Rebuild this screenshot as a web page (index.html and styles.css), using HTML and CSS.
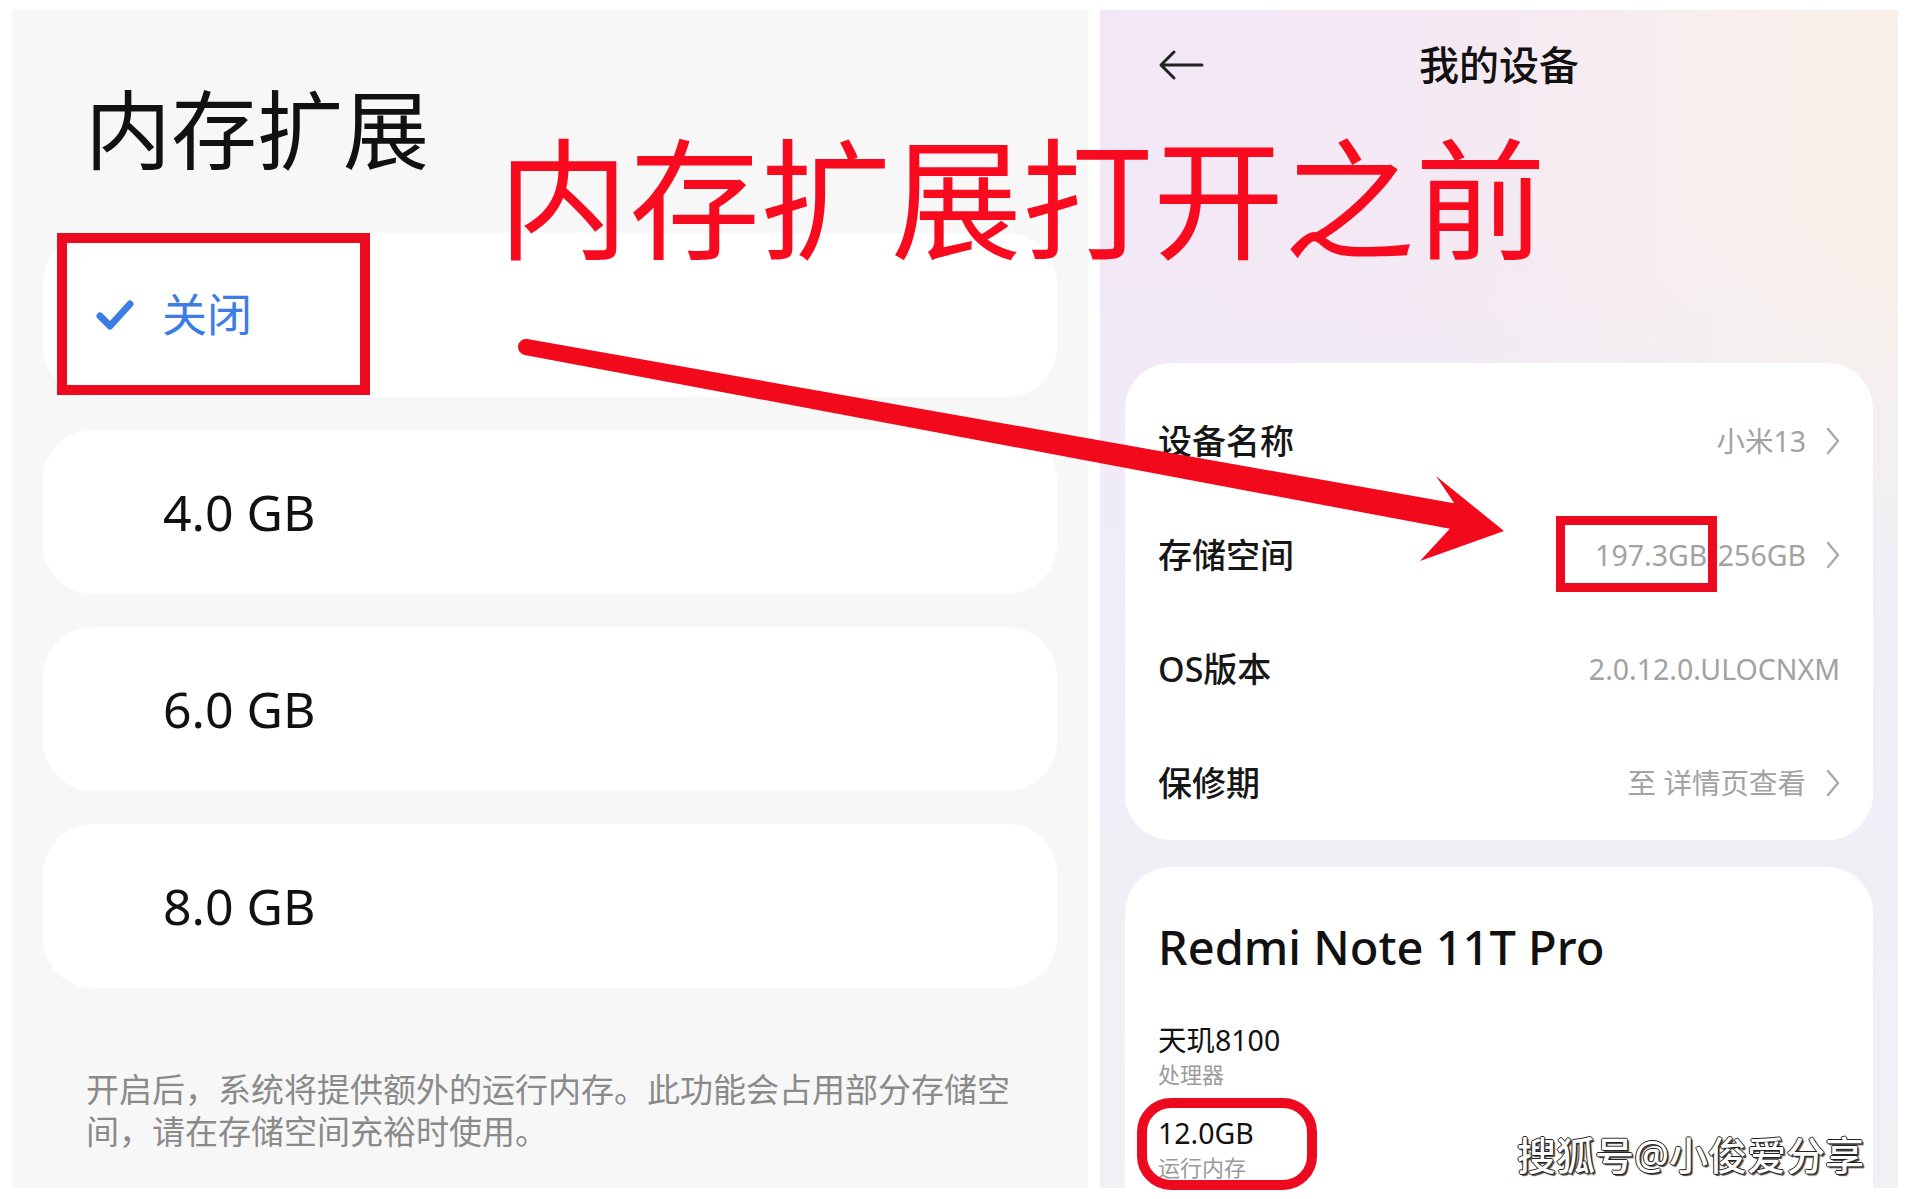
FILE: index.html
```html
<!DOCTYPE html>
<html lang="zh-CN">
<head>
  <meta charset="UTF-8">
  <meta name="viewport" content="width=device-width, initial-scale=1.0">
  <title>内存扩展 / 我的设备</title>
  <link rel="stylesheet" href="styles.css">
</head>
<body>
  <div class="page">

    <!-- Memory extension settings -->
    <section class="panel memory">
      <h1 class="memory-title">内存扩展</h1>
      <ul class="options">
        <li class="option selected">
          <svg class="check" width="40" height="34" viewBox="0 0 40 34">
            <polyline points="5,18 15,28 35,6" fill="none" stroke="#3b7de3" stroke-width="7" stroke-linecap="round" stroke-linejoin="round"/>
          </svg>
          <span>关闭</span>
        </li>
        <li class="option"><span>4.0 GB</span></li>
        <li class="option"><span>6.0 GB</span></li>
        <li class="option"><span>8.0 GB</span></li>
      </ul>
      <p class="memory-note">开启后，系统将提供额外的运行内存。此功能会占用部分存储空间，请在存储空间充裕时使用。</p>
    </section>

    <!-- My device -->
    <section class="panel device">
      <header class="device-head">
        <svg class="back" width="46" height="32" viewBox="0 0 46 32">
          <path d="M44 16H3M16 3L3 16l13 13" fill="none" stroke="#222" stroke-width="3" stroke-linecap="round" stroke-linejoin="round"/>
        </svg>
        <h2>我的设备</h2>
        <span></span>
      </header>

      <div class="card info-list">
        <div class="info-row">
          <span class="info-label">设备名称</span>
          <span class="info-value">小米13
            <svg class="chevron" width="14" height="28" viewBox="0 0 14 28"><polyline points="2,2 12,14 2,26" fill="none" stroke="#ababab" stroke-width="2.5" stroke-linecap="round" stroke-linejoin="round"/></svg>
          </span>
        </div>
        <div class="info-row">
          <span class="info-label">存储空间</span>
          <span class="info-value">197.3GB/256GB
            <svg class="chevron" width="14" height="28" viewBox="0 0 14 28"><polyline points="2,2 12,14 2,26" fill="none" stroke="#ababab" stroke-width="2.5" stroke-linecap="round" stroke-linejoin="round"/></svg>
          </span>
        </div>
        <div class="info-row">
          <span class="info-label">OS版本</span>
          <span class="info-value">2.0.12.0.ULOCNXM</span>
        </div>
        <div class="info-row">
          <span class="info-label">保修期</span>
          <span class="info-value">至 详情页查看
            <svg class="chevron" width="14" height="28" viewBox="0 0 14 28"><polyline points="2,2 12,14 2,26" fill="none" stroke="#ababab" stroke-width="2.5" stroke-linecap="round" stroke-linejoin="round"/></svg>
          </span>
        </div>
      </div>

      <div class="card spec-card">
        <h3 class="model">Redmi Note 11T Pro</h3>
        <div class="spec">
          <div class="spec-value">天玑8100</div>
          <div class="spec-name">处理器</div>
        </div>
        <div class="spec">
          <div class="spec-value">12.0GB</div>
          <div class="spec-name">运行内存</div>
        </div>
      </div>
    </section>

    <!-- Red annotations drawn over both screens -->
    <div class="marks">
      <div class="headline">内存扩展打开之前</div>
      <div class="ring ring-off"></div>
      <div class="ring ring-storage"></div>
      <div class="ring ring-ram"></div>
      <svg class="pointer" width="1909" height="1199" viewBox="0 0 1909 1199">
        <path d="M527.4,339.1 L1454.2,503.2 L1436,476 L1504,531 L1420,561 L1449.8,528.8 L524.6,354.9 A8,8 0 0 1 527.4,339.1 Z" fill="#f20a1c"/>
      </svg>
      <div class="watermark">搜狐号@小俊爱分享</div>
    </div>

  </div>
</body>
</html>
```

FILE: styles.css
```css
* {
  box-sizing: border-box;
}

body {
  margin: 0;
  background: #fff;
  font-family: "Noto Sans", "Noto Sans CJK SC", sans-serif;
  color: #111;
}

.page {
  position: relative;
  display: flex;
  gap: 12px;
  width: 1909px;
  height: 1199px;
  padding: 10px 11px 11px 12px;
  overflow: hidden;
}

.panel {
  height: 1178px;
  flex-shrink: 0;
}

/* ---------- memory extension ---------- */

.memory {
  width: 1076px;
  background: #f7f7f7;
  padding: 78px 31px 0;
}

.memory-title {
  margin: 0 0 61px 42px;
  font-size: 86px;
  line-height: 84px;
  font-weight: 400;
  color: #111;
}

.options {
  list-style: none;
  margin: 0;
  padding: 0;
  display: flex;
  flex-direction: column;
  gap: 33px;
}

.option {
  height: 164px;
  background: #fff;
  border-radius: 50px;
  display: flex;
  align-items: center;
  padding-left: 120px;
  font-size: 50px;
  line-height: 60px;
  color: #111;
}

.option.selected {
  padding-left: 52px;
  gap: 27px;
  font-size: 45px;
  color: #3b7de3;
}

.memory-note {
  margin: 81px 0 0 43px;
  width: 940px;
  font-size: 33px;
  line-height: 42px;
  color: #8a8a8a;
}

/* ---------- my device ---------- */

.device {
  width: 798px;
  overflow: hidden;
  padding: 0 25px;
  background:
    linear-gradient(180deg, rgba(239, 238, 248, 0) 0%, rgba(239, 238, 248, 0) 18%, #efeef7 52%, #f0f0f5 100%),
    linear-gradient(90deg, #f2e7f6 0%, #f4e9f3 45%, #f7eeee 75%, #f9f1e9 100%);
}

.device-head {
  height: 109px;
  display: grid;
  grid-template-columns: 1fr auto 1fr;
  align-items: center;
  padding: 0 33px;
}

.device-head h2 {
  margin: 0;
  font-size: 40px;
  line-height: 48px;
  font-weight: 500;
  color: #111;
}

.back {
  display: block;
}

.card {
  background: #fff;
  border-radius: 46px;
}

.info-list {
  margin-top: 244px;
  padding: 21px 33px 0;
}

.info-row {
  height: 114px;
  display: flex;
  align-items: center;
  justify-content: space-between;
}

.info-label {
  font-size: 34px;
  line-height: 40px;
  font-weight: 500;
  color: #161616;
}

.info-value {
  display: flex;
  align-items: center;
  gap: 20px;
  font-size: 28.5px;
  line-height: 36px;
  color: #a2a2a2;
}

.chevron {
  display: block;
}

.spec-card {
  margin-top: 27px;
  padding: 50px 33px 0;
  height: 420px;
}

.model {
  margin: 0;
  font-size: 47px;
  line-height: 60px;
  font-weight: 500;
  color: #111;
}

.spec {
  margin-top: 45px;
}

.spec + .spec {
  margin-top: 28px;
}

.spec-value {
  font-size: 28.5px;
  line-height: 36px;
  color: #111;
}

.spec-name {
  margin-top: 3px;
  font-size: 22px;
  line-height: 26px;
  color: #9a9a9a;
}

/* ---------- annotations ---------- */

.marks {
  position: absolute;
  inset: 0;
  pointer-events: none;
}

.headline {
  position: absolute;
  left: 498px;
  top: 133px;
  font-size: 131px;
  line-height: 131px;
  color: #f80b1f;
  white-space: nowrap;
}

.ring {
  position: absolute;
  border: 10px solid #ee0a1e;
}

.ring-off {
  left: 57px;
  top: 233px;
  width: 313px;
  height: 162px;
}

.ring-storage {
  left: 1556px;
  top: 516px;
  width: 161px;
  height: 76px;
  border-width: 9px;
}

.ring-ram {
  left: 1137px;
  top: 1098px;
  width: 180px;
  height: 92px;
  border-radius: 34px;
}

.pointer {
  position: absolute;
  left: 0;
  top: 0;
}

.watermark {
  position: absolute;
  left: 1517px;
  top: 1131px;
  font-size: 39px;
  line-height: 48px;
  font-weight: 500;
  color: #fff;
  white-space: nowrap;
  text-shadow: -1px 0 0 #222, 1px 0 0 #222, 0 -1px 0 #222, 0 1px 0 #222, 2px 2px 1px #444;
}
```
